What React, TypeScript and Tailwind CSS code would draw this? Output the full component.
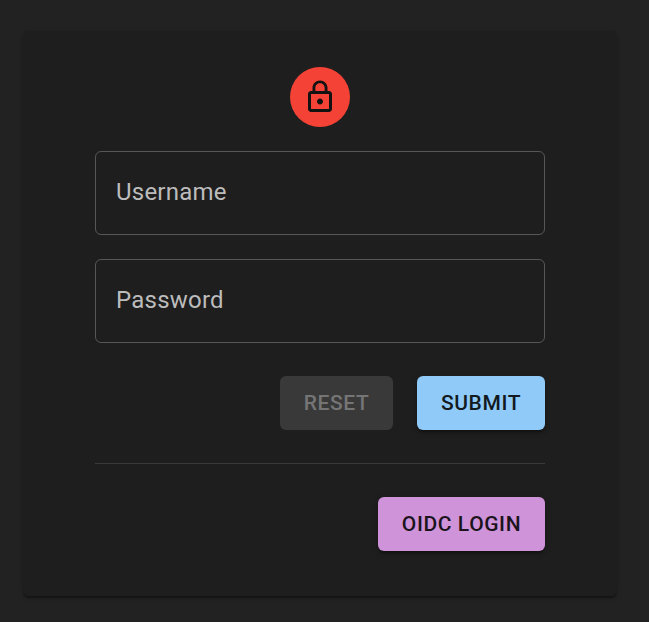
import type { ReactNode } from 'react';

function Field({ label }: { label: string }) {
  return (
    <label className="flex h-[84px] w-full items-center rounded-[6px] border border-[#575757] px-5 pb-0.5 text-[24px] leading-9 tracking-[0.225px] text-[#bcbcbc]">
      {label}
    </label>
  );
}

function Button({ className, children }: { className: string; children: ReactNode }) {
  return (
    <button
      className={`flex h-[54px] items-center justify-center rounded-[6px] text-[21px] font-medium leading-9 tracking-[0.6px] ${className}`}
    >
      {children}
    </button>
  );
}

const raised =
  'shadow-[0_4.5px_1.5px_-3px_rgba(0,0,0,0.2),0_3px_3px_0_rgba(0,0,0,0.14),0_1.5px_7.5px_0_rgba(0,0,0,0.12)]';

export default function App() {
  return (
    <main className="h-[622px] w-[649px] overflow-hidden bg-[#222222] pl-[23px] pt-[31px] font-[Roboto,sans-serif]">
      <section className="flex h-[565px] w-[594px] flex-col items-center rounded-[6px] bg-[#1e1e1e] px-[72px] pt-9 shadow-[0_3px_1.5px_-1.5px_rgba(0,0,0,0.2),0_1.5px_1.5px_0_rgba(0,0,0,0.14),0_1.5px_4.5px_0_rgba(0,0,0,0.12)]">
        <div className="flex size-[60px] items-center justify-center rounded-full bg-[#f44336]">
          <svg viewBox="0 0 24 24" className="size-9 fill-[#121212]">
            <path d="M12 17c1.1 0 2-.9 2-2s-.9-2-2-2-2 .9-2 2 .9 2 2 2zm6-9h-1V6c0-2.76-2.24-5-5-5S7 3.24 7 6v2H6c-1.1 0-2 .9-2 2v10c0 1.1.9 2 2 2h12c1.1 0 2-.9 2-2V10c0-1.1-.9-2-2-2zM8.9 6c0-1.71 1.39-3.1 3.1-3.1s3.1 1.39 3.1 3.1v2H8.9V6zM18 20H6V10h12v10z" />
          </svg>
        </div>
        <div className="mt-6 flex w-full flex-col gap-6">
          <Field label="Username" />
          <Field label="Password" />
        </div>
        <div className="mt-[33px] flex w-full justify-end gap-6">
          <Button className="w-[113px] bg-[#393939] text-[#757575]">RESET</Button>
          <Button className={`w-[128px] bg-[#90caf9] text-[#121a20] ${raised}`}>SUBMIT</Button>
        </div>
        <div className="mt-[33px] h-px w-full bg-[#393939]" />
        <div className="mt-[33px] flex w-full justify-end">
          <Button className={`w-[167px] bg-[#ce93d8] text-[#1b131c] ${raised}`}>OIDC LOGIN</Button>
        </div>
      </section>
    </main>
  );
}
